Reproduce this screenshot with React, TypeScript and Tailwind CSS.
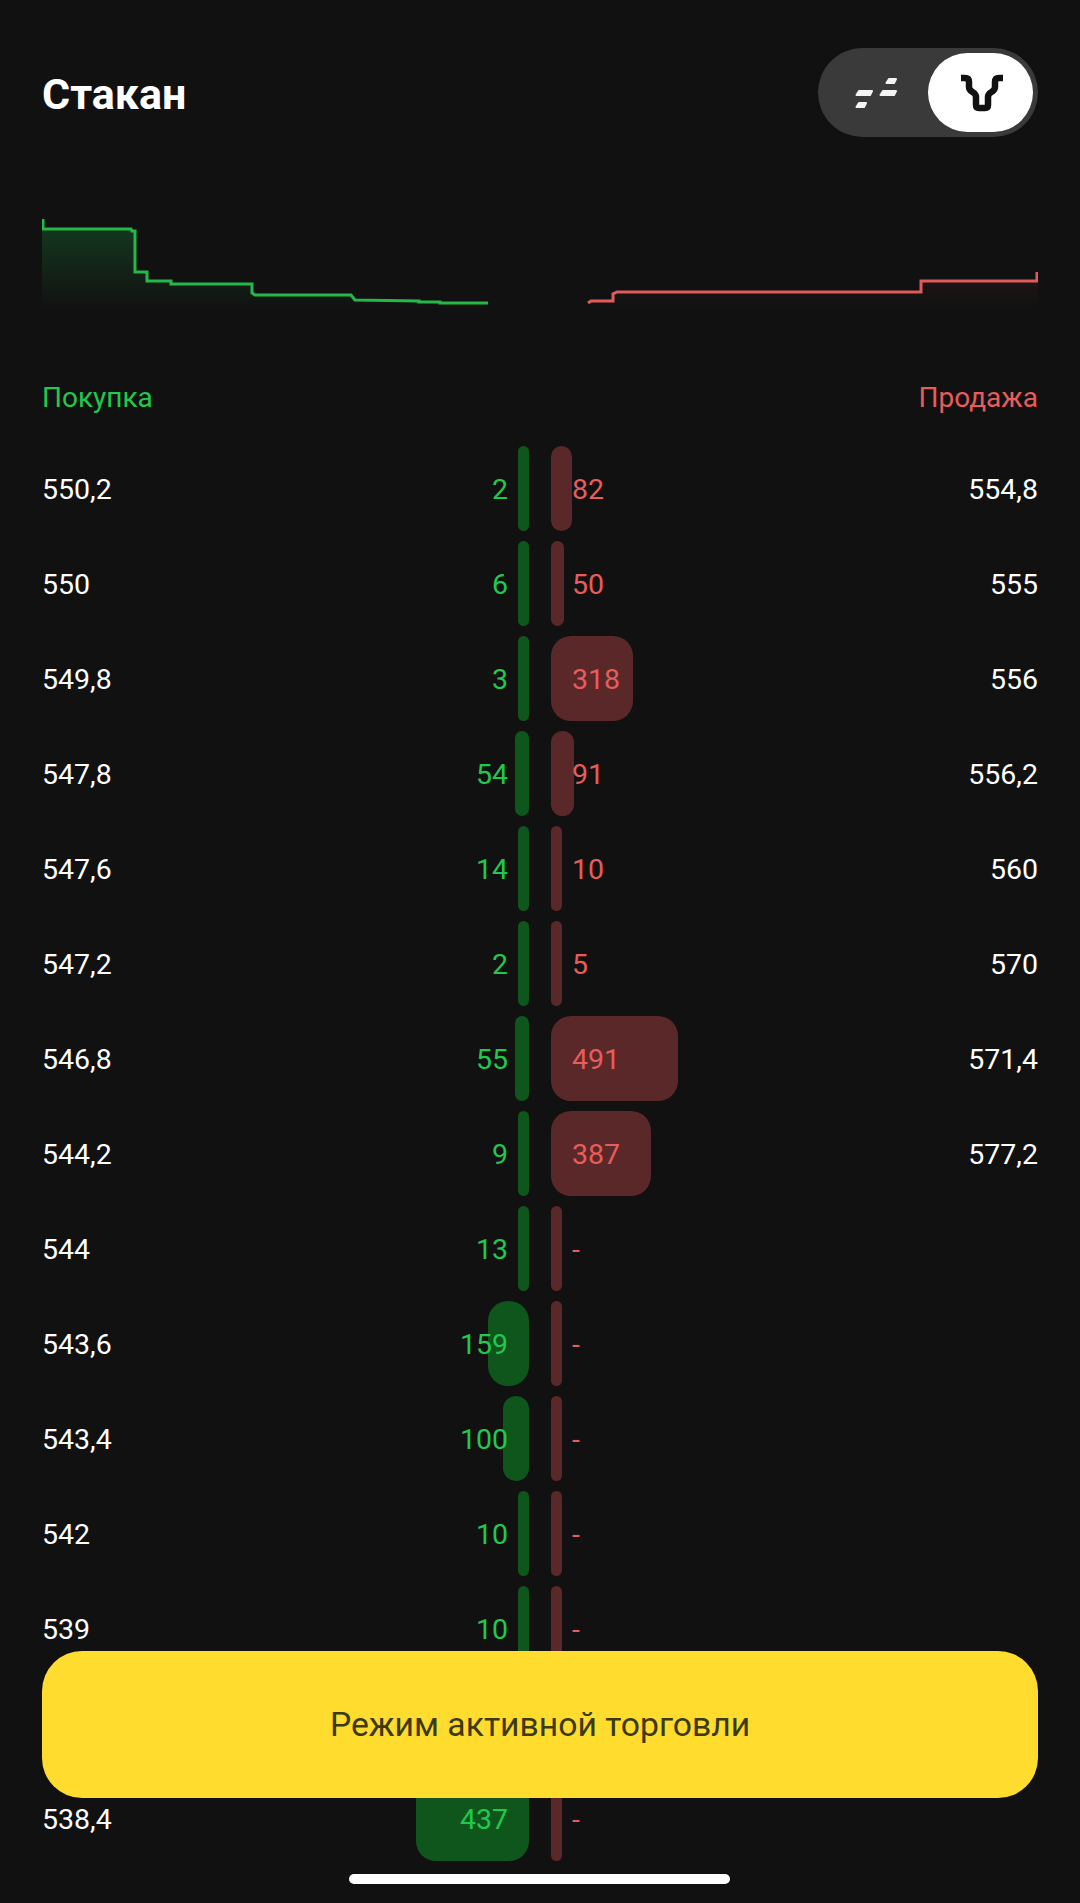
const rows: { price: string; buy: number | null; sell: number | null; ask?: string }[] = [
  { price: "550,2", buy: 2, sell: 82, ask: "554,8" },
  { price: "550", buy: 6, sell: 50, ask: "555" },
  { price: "549,8", buy: 3, sell: 318, ask: "556" },
  { price: "547,8", buy: 54, sell: 91, ask: "556,2" },
  { price: "547,6", buy: 14, sell: 10, ask: "560" },
  { price: "547,2", buy: 2, sell: 5, ask: "570" },
  { price: "546,8", buy: 55, sell: 491, ask: "571,4" },
  { price: "544,2", buy: 9, sell: 387, ask: "577,2" },
  { price: "544", buy: 13, sell: null },
  { price: "543,6", buy: 159, sell: null },
  { price: "543,4", buy: 100, sell: null },
  { price: "542", buy: 10, sell: null },
  { price: "539", buy: 10, sell: null },
  { price: "", buy: null, sell: null },
  { price: "538,4", buy: 437, sell: null },
];

const barWidth = (n: number | null) => Math.max(11, (n ?? 0) * 0.258);

function Depth() {
  // coordinates are relative to the chart box (x - 42, y - 215)
  const buy =
    "1,4 1,14 89,14 90,16 93,16 93,57 105,57 105,66 129,66 129,69 210,69 210,78 213,80 309,80 313,85 377,86 377,87 398,87 398,88 446,88";
  const sell =
    "546,88 549,86 571,86 571,79 575,77 879,77 879,66 995,66 995,57";
  return (
    <svg viewBox="0 0 996 95" className="mt-[78px] block h-[95px] w-full">
      <defs>
        <linearGradient id="buyFill" x1="0" y1="0" x2="0" y2="1">
          <stop offset="0" stopColor="#20c94e" stopOpacity="0.2" />
          <stop offset="1" stopColor="#20c94e" stopOpacity="0" />
        </linearGradient>
        <linearGradient id="sellFill" x1="0" y1="0" x2="0" y2="1">
          <stop offset="0" stopColor="#e85c5c" stopOpacity="0.05" />
          <stop offset="1" stopColor="#e85c5c" stopOpacity="0" />
        </linearGradient>
      </defs>
      <polygon points={`0,14 89,14 93,16 93,57 105,57 105,66 129,66 129,69 210,69 210,78 309,80 313,85 398,87 446,88 446,95 0,95`} fill="url(#buyFill)" />
      <polygon points="546,88 571,86 575,77 879,77 879,66 996,66 996,95 546,95" fill="url(#sellFill)" />
      <polyline points={buy} fill="none" stroke="#25b849" strokeWidth="3" />
      <polyline points={sell} fill="none" stroke="#e25b5b" strokeWidth="3" />
    </svg>
  );
}

function DashesIcon() {
  return (
    <svg viewBox="0 0 42 30" className="h-[30px] w-[42px]" fill="#f4f4f4" stroke="#f4f4f4" strokeWidth="2" strokeLinejoin="round">
      <path d="M4 13H17L15 17H1.500Z" />
      <path d="M4 25H11L9 29H1.500Z" />
      <path d="M28 13H41L39 17H25.500Z" />
      <path d="M34 1H41L39 5H31.500Z" />
    </svg>
  );
}

function BullIcon() {
  return (
    <svg viewBox="0 0 60 55" className="h-[55px] w-[60px]" fill="none" stroke="#111111" strokeWidth="6.500" strokeLinejoin="round">
      <path d="M10 13H14Q18 13 18 17V22Q18 25 21.500 27Q25 29 25 32V40Q25 43 28 43H34Q37 43 37 40V32Q37 29 40.500 27Q44 25 44 22V17Q44 13 48 13H52" />
    </svg>
  );
}

export default function App() {
  return (
    <div className="relative h-[1903px] w-[1080px] overflow-hidden bg-[#111111] font-['Roboto',sans-serif] text-white">
      <div className="px-[42px] pt-[48px]">
        <header className="flex items-center justify-between">
          <h1 className="pt-[2px] text-[43px] font-bold leading-[48px]">Стакан</h1>
          <div className="flex h-[89px] w-[220px] items-center justify-between rounded-full bg-[#3a3a3a] pl-[37px] pr-[5px]">
            <DashesIcon />
            <div className="flex h-[79px] w-[105px] items-center justify-center rounded-full bg-white">
              <BullIcon />
            </div>
          </div>
        </header>

        <Depth />

        <div className="mt-[70px] flex justify-between text-[28px] leading-[36px]">
          <span className="text-[#20c94e]">Покупка</span>
          <span className="text-[#e85c5c]">Продажа</span>
        </div>

        <div className="mt-[30px] flex flex-col gap-y-[10px] text-[28.500px]">
          {rows.map((row, i) => (
            <div key={i} className="grid h-[85px] grid-cols-2 gap-x-[22px]">
              <div className="relative flex items-center justify-between pr-[21px] pt-[4px]">
                <div
                  className="absolute inset-y-0 right-0 rounded-[20px] bg-[#0e561c]"
                  style={{ width: barWidth(row.buy) }}
                />
                <span className="relative">{row.price}</span>
                <span className="relative text-[#20c94e]">{row.buy}</span>
              </div>
              <div className="relative flex items-center justify-between pl-[21px] pt-[4px]">
                <div
                  className="absolute inset-y-0 left-0 rounded-[20px] bg-[#5a2829]"
                  style={{ width: barWidth(row.sell) }}
                />
                <span className="relative text-[#e85c5c]">{row.sell ?? (row.price ? "-" : "")}</span>
                <span className="relative">{row.ask}</span>
              </div>
            </div>
          ))}
        </div>
      </div>

      <button className="absolute left-[42px] top-[1651px] flex h-[147px] w-[996px] items-center justify-center rounded-[40px] bg-[#ffdc2d] pt-[2px] text-[33.700px] text-[#3d3a12]">
        Режим активной торговли
      </button>
      <div className="absolute left-[349px] top-[1874px] h-[10px] w-[381px] rounded-full bg-white" />
    </div>
  );
}
